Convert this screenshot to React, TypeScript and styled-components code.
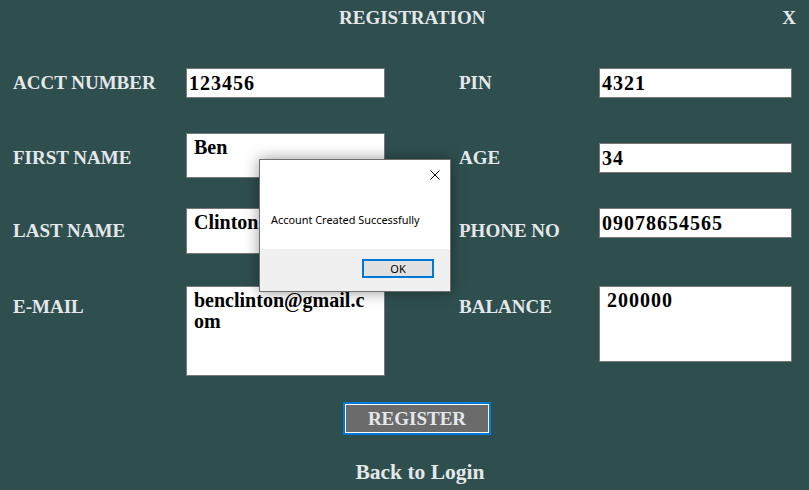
import React from 'react';
import styled, { createGlobalStyle } from 'styled-components';

const GlobalStyle = createGlobalStyle`
  html, body {
    margin: 0;
    padding: 0;
    background: #2f4f4f;
  }
  body {
    font-family: "Liberation Serif", "Times New Roman", serif;
  }
  * {
    box-sizing: border-box;
  }
`;

const LEFT_FIELDS = [
  { label: 'ACCT NUMBER', value: '123456', height: 30, multi: false, numeric: true },
  { label: 'FIRST NAME', value: 'Ben', height: 45, multi: true, numeric: false },
  { label: 'LAST NAME', value: 'Clinton', height: 46, multi: true, numeric: false },
  { label: 'E-MAIL', value: 'benclinton@gmail.c\nom', height: 90, multi: true, numeric: false },
];

const RIGHT_FIELDS = [
  { label: 'PIN', value: '4321', height: 30, offset: 0, multi: false },
  { label: 'AGE', value: '34', height: 30, offset: 10, multi: false },
  { label: 'PHONE NO', value: '09078654565', height: 30, offset: 0, multi: false },
  { label: 'BALANCE', value: '200000', height: 76, offset: 0, multi: true },
];

// gap above each row, and how far its labels sit below the row top
const ROWS = [
  { gap: 32, labelPad: 3 },
  { gap: 35, labelPad: 13 },
  { gap: 30, labelPad: 11 },
  { gap: 32, labelPad: 9 },
];

const Frame = styled.div`
  position: relative;
  width: 809px;
  height: 490px;
  background: #2f4f4f;
  color: #e4e8ea;
  overflow: hidden;
`;

const TitleBar = styled.header`
  display: flex;
  align-items: center;
  height: 36px;
  padding-right: 13px;
  font-size: 19px;
  font-weight: 700;
`;

const Title = styled.h1`
  margin: 0 0 0 339px;
  font-size: 19px;
  font-weight: 700;
  line-height: 36px;
`;

const CloseText = styled.span`
  margin-left: auto;
  line-height: 36px;
  cursor: pointer;
`;

const Form = styled.div`
  display: flex;
  flex-direction: column;
`;

const FormRow = styled.div<{ $gap: number }>`
  display: grid;
  grid-template-columns: 173px 199px 74px 140px 193px;
  align-items: start;
  padding-left: 13px;
  margin-top: ${p => p.$gap}px;
`;

const Label = styled.label<{ $pad: number }>`
  padding-top: ${p => p.$pad}px;
  font-size: 19px;
  font-weight: 700;
  line-height: 24px;
  white-space: nowrap;
`;

const Field = styled.div<{ $height: number; $multi: boolean; $offset?: number; $numeric?: boolean }>`
  height: ${p => p.$height}px;
  margin-top: ${p => p.$offset || 0}px;
  background: #fff;
  border: 1px solid #777;
  color: #000;
  font-size: 20px;
  font-weight: 700;
  letter-spacing: ${p => (p.$numeric ? '1px' : '0')};
  white-space: pre-wrap;
  padding: ${p => (p.$multi ? '3px 7px' : '0 2px')};
  line-height: ${p => (p.$multi ? '21px' : `${p.$height - 2}px`)};
`;

const Spacer = styled.div``;

const Actions = styled.div`
  display: flex;
  flex-direction: column;
  align-items: center;
  padding-left: 25px;
  margin-top: 26px;
`;

const RegisterButton = styled.button`
  width: 148px;
  height: 33px;
  background: #6b6b6b;
  border: 2px solid #0078d7;
  box-shadow: inset 0 0 0 1px #fff;
  color: #e4e8ea;
  font-family: "Liberation Serif", "Times New Roman", serif;
  font-size: 19px;
  font-weight: 700;
  padding: 0;
`;

const BackLink = styled.a`
  margin-top: 24px;
  margin-left: 6px;
  font-size: 21.5px;
  font-weight: 700;
  line-height: 26px;
  color: #e4e8ea;
  cursor: pointer;
`;

const Dialog = styled.div`
  position: absolute;
  left: 259px;
  top: 159px;
  width: 192px;
  height: 133px;
  display: flex;
  flex-direction: column;
  background: #fff;
  border: 1px solid #6f6f6f;
  box-shadow: 0 0 14px rgba(0, 0, 0, 0.4);
  font-family: "Noto Sans", "Liberation Sans", Arial, sans-serif;
  color: #000;
`;

const DialogHeader = styled.div`
  height: 30px;
  display: flex;
  justify-content: flex-end;
  align-items: center;
  padding-right: 10px;
`;

const DialogBody = styled.div`
  flex: 1;
  display: flex;
  align-items: center;
  padding-left: 11px;
  font-size: 10.9px;
`;

const DialogFooter = styled.div`
  height: 42px;
  display: flex;
  justify-content: flex-end;
  align-items: flex-start;
  padding: 10px 16px 0 0;
  background: #f0f0f0;
`;

const OkButton = styled.button`
  width: 72px;
  height: 19px;
  padding: 0;
  background: #e1e1e1;
  border: 2px solid #0078d7;
  font-family: "Noto Sans", "Liberation Sans", Arial, sans-serif;
  font-size: 11px;
  line-height: 14px;
  color: #000;
`;

const CloseIcon = () => (
  <svg width="10" height="10" viewBox="0 0 10 10">
    <path d="M0.5 0.5 L9.5 9.5 M9.5 0.5 L0.5 9.5" stroke="#000" strokeWidth="1" fill="none" />
  </svg>
);

const App = () => (
  <Frame>
    <GlobalStyle />
    <TitleBar>
      <Title>REGISTRATION</Title>
      <CloseText>X</CloseText>
    </TitleBar>
    <Form>
      {ROWS.map((row, i) => {
        const left = LEFT_FIELDS[i];
        const right = RIGHT_FIELDS[i];
        return (
          <FormRow $gap={row.gap} key={left.label}>
            <Label $pad={row.labelPad}>{left.label}</Label>
            <Field $height={left.height} $multi={left.multi} $numeric={left.numeric}>{left.value}</Field>
            <Spacer />
            <Label $pad={row.labelPad}>{right.label}</Label>
            <Field $height={right.height} $multi={right.multi} $offset={right.offset} $numeric>{right.value}</Field>
          </FormRow>
        );
      })}
    </Form>
    <Actions>
      <RegisterButton>REGISTER</RegisterButton>
      <BackLink>Back to Login</BackLink>
    </Actions>
    <Dialog>
      <DialogHeader>
        <CloseIcon />
      </DialogHeader>
      <DialogBody>Account Created Successfully</DialogBody>
      <DialogFooter>
        <OkButton>OK</OkButton>
      </DialogFooter>
    </Dialog>
  </Frame>
);

export default App;
